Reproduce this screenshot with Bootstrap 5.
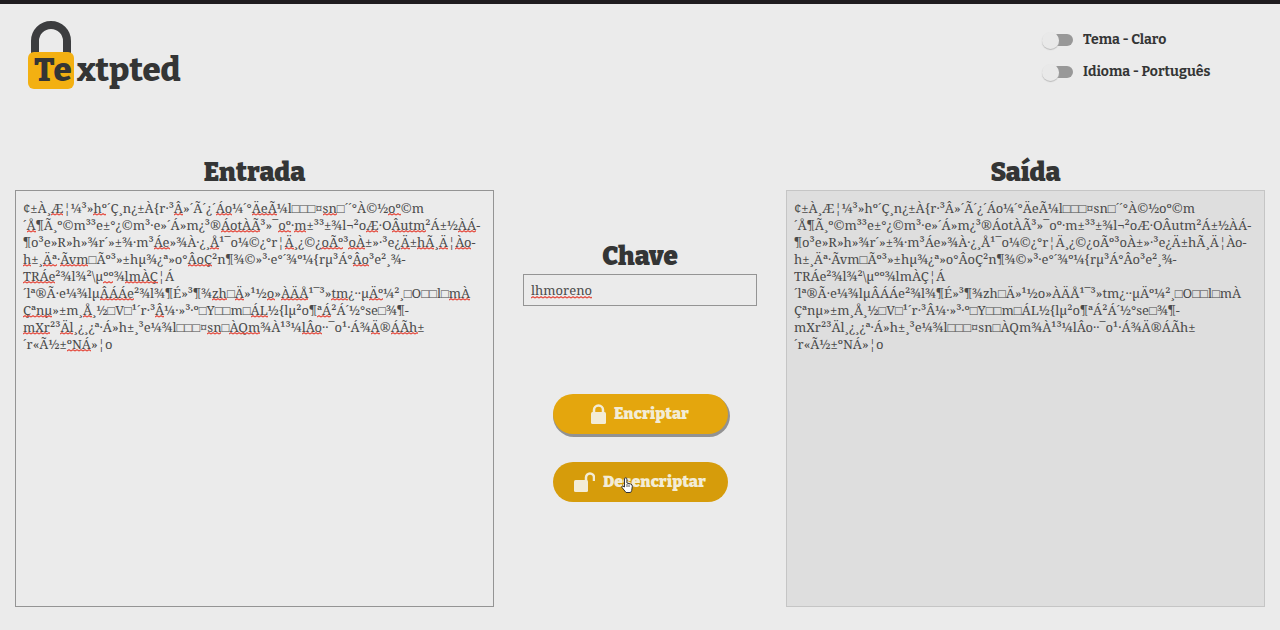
<!DOCTYPE html>
<html lang="pt-BR">
<head>
<meta charset="utf-8">
<meta name="viewport" content="width=device-width, initial-scale=1">
<title>Textpted</title>
<link href="https://cdn.jsdelivr.net/npm/bootstrap@5.3.0/dist/css/bootstrap.min.css" rel="stylesheet">
<style>
  :root { --ink: #343535; --paper: #ebebeb; --gold: #e4a60d; }
  body { background: var(--paper); color: var(--ink); border-top: 4px solid #1f1c1f; min-height: 100vh;
         font-family: "Bitter", "DejaVu Serif Condensed", "DejaVu Serif", serif; }
  .top-bar { height: 149px; padding: 16px 64px 0 28px; }
  .brand { color: var(--ink); font-size: 33px; line-height: 40px; font-weight: 800; }
  .brand-lock { width: 46px; height: 70px; }
  .brand-word { position: absolute; left: 6px; top: 30px; display: flex; gap: 5px; }
  .options { width: 173px; padding-top: 8px; gap: 8px; font-weight: 700; }
  .option { font-size: 14px; line-height: 24px; min-height: 24px; white-space: nowrap; gap: 10px; }
  .toggle { appearance: none; width: 30px; height: 12px; margin: 0; border-radius: 6px; background: #989898; position: relative; flex: none; }
  .toggle::before { content: ""; position: absolute; left: -1px; top: -2px; width: 17px; height: 17px; border-radius: 50%;
                    background: #e9e9e9; box-shadow: 0 1px 1px #bbb; }
  .toggle:checked::before { left: 14px; }
  .workspace { display: grid; grid-template-columns: 479fr 234fr 479fr; column-gap: 29px; padding: 0 15px 24px; }
  .title { font-size: 26px; line-height: 34px; padding-top: 3px; margin: 0; text-align: center; font-weight: 900; }
  .field { background: transparent; border: 1px solid #949494; border-radius: 0; color: #4a4a4a; outline: 0; display: block; width: 100%;
           font-family: "Noto Serif", serif; font-size: 13px; }
  .text-area { line-height: 17px; padding: 9px 7px; height: calc(100vh - 213px); min-height: 240px; resize: none; white-space: pre; overflow: hidden; }
  .text-area[readonly] { background: #dedede; border-color: #c5c5c5; }
  .key-field { line-height: 20px; height: 32px; padding: 0 7px; }
  .spell { position: absolute; left: 8px; top: 0; width: calc(100% - 16px); height: 100%; pointer-events: none; }
  .controls { padding-top: 84px; }
  .actions { margin-top: 88px; gap: 28px; }
  .action { color: #f3ecd5; background: var(--gold); border: 0; border-radius: 20px; width: 175px; height: 40px; font-size: 16px; line-height: 24px; font-weight: 900; }
  .action-raised { box-shadow: 1px 2px 0 1px #929292; }
  .action-hover { background: #d69c0b; }
  .pointer { position: absolute; left: 68px; top: 15px; }
</style>
</head>
<body>
<svg width="0" height="0" class="position-absolute" aria-hidden="true">
  <defs><pattern id="wave" width="4" height="3" patternUnits="userSpaceOnUse"><path d="M0 2 L2 .8 L4 2" fill="none" stroke="#e5493d" stroke-width="1.200"/></pattern></defs>
</svg>
<header class="top-bar d-flex justify-content-between align-items-start">
  <a href="#" class="brand text-decoration-none position-relative">
    <svg class="brand-lock d-block" viewBox="0 0 46 70" aria-hidden="true">
      <path d="M7 34V21a16 16 0 0 1 32 0v13" fill="none" stroke="#3c3d3f" stroke-width="8"/>
      <rect y="32" width="46" height="37" rx="6" fill="#f3b012"/>
    </svg>
    <span class="brand-word"><span>Te</span><span>xtpted</span></span>
  </a>
  <div class="options d-flex flex-column">
    <label class="option d-flex align-items-center"><input type="checkbox" role="switch" class="toggle">Tema - Claro</label>
    <label class="option d-flex align-items-center"><input type="checkbox" role="switch" class="toggle">Idioma - Português</label>
  </div>
</header>
<main class="workspace">
  <section>
    <h2 class="title"><label for="entrada">Entrada</label></h2>
    <div class="position-relative">
      <textarea id="entrada" class="field text-area" spellcheck="false">¢±À¸Æ¦¼³»hº´Ç¸n¿±À{r·³Â»´Ã´¿´Áo¼´°ÄeÃ¼l□□□¤sn□´´°À©½oº©m
´Å¶Ã¸º©m³³e±°¿©m³·e»´Á»m¿³®ÁotÀÃ³»¯oº·m±³³±¾l¬²oÆ·OÂutm²Á±½ÀÁ-
¶o³e»R»h»¾r´»±¾·m³Áe»¾À·¿¸Å¹¯o¼©¿°r¦Ä¸¿©¿oÃº³oÀ±»·³e¿Ä±hÃ¸Ä¦Ào-
h±¸Äª·Ãvm□Ãº³»±hµ¾¿ª»o°ÂoÇ²n¶¾©»³·e°´¾º¼{rµ³Á°Âo³e²¸¾-
TRÁe²¾l¾²\µºº¾lmÀÇ¦Á
´lª®Ã·e¼¾lµÂÁÁe²¾l¾¶É»³¶¾zh□Ä»¹½o»ÀÄÅ¹¯³»tm¿··µÄº¼²¸□O□□l□mÀ
Çªnµ»±m¸Å¸½□V□¹´r·³Â¼·»³·º□Y□□m□ÁL½{lµ²o¶ªÁ²Á´½°se□¾¶-
mXr²³Äl¸¿¸¿ª·Á»h±¸³e¼¾l□□□¤sn□ÀQm¾À¹³¼lÂo··¯o¹·Á¾Ä®ÁÃh±
´r«Ã½±ºNÁ»¦o</textarea>
      <svg class="spell" id="entrada-spell" aria-hidden="true"></svg>
    </div>
  </section>
  <section class="controls d-flex flex-column align-items-center">
    <h2 class="title"><label for="chave">Chave</label></h2>
    <div class="position-relative w-100">
      <input id="chave" type="text" class="field key-field" value="lhmoreno" spellcheck="false">
      <svg class="spell" id="chave-spell" aria-hidden="true"></svg>
    </div>
    <div class="actions d-flex flex-column align-items-center">
      <button type="button" class="action action-raised d-flex align-items-center justify-content-center gap-2">
        <svg width="15" height="21" viewBox="0 0 15 21" aria-hidden="true"><path d="M3 10V6a4.500 4.500 0 0 1 9 0v4" fill="none" stroke="currentColor" stroke-width="2.500"/><rect y="8" width="15" height="12" rx="1.500" fill="currentColor"/></svg>
        Encriptar
      </button>
      <button type="button" class="action action-hover position-relative d-flex align-items-center justify-content-center gap-2">
        <svg width="21" height="21" viewBox="0 0 21 21" aria-hidden="true"><path d="M12 10V5.500a4 4 0 0 1 8 0V9" fill="none" stroke="currentColor" stroke-width="2.500"/><rect y="8" width="14" height="12" rx="1.500" fill="currentColor"/></svg>
        Desencriptar
        <svg class="pointer" width="12" height="17" viewBox="0 0 12 17" aria-hidden="true"><path d="M3.500 10V2a1.200 1.200 0 0 1 2.400 0v4l3.800 1q1.800.5 1.600 2.500l-.6 4-1 2H5L1 10.500q-.6-1.500.8-1.500z" fill="#fff" stroke="#333"/><path d="M6 7v3M8 7.500V10" stroke="#333" stroke-width=".8"/></svg>
      </button>
    </div>
  </section>
  <section>
    <h2 class="title"><label for="saida">Saída</label></h2>
    <textarea id="saida" class="field text-area" readonly></textarea>
  </section>
</main>
<script src="https://cdn.jsdelivr.net/npm/bootstrap@5.3.0/dist/js/bootstrap.bundle.min.js"></script>
<script>
  const input = document.getElementById('entrada');
  document.getElementById('saida').value = input.value;

  // Draw the spelling marks under the given words, line by line.
  function underline(field, layer, words, top, step) {
    const ctx = document.createElement('canvas').getContext('2d');
    const style = getComputedStyle(field);
    ctx.font = style.fontSize + ' ' + style.fontFamily;
    field.value.split('\n').forEach((line, row) => {
      let from = 0;
      for (const word of words[row].split(' ')) {
        const at = line.indexOf(word, from);
        if (at < 0) continue;
        from = at + word.length;
        const rect = document.createElementNS('http://www.w3.org/2000/svg', 'rect');
        const group = document.createElementNS('http://www.w3.org/2000/svg', 'g');
        const x = Math.round(ctx.measureText(line.slice(0, at)).width);
        group.setAttribute('transform', `translate(${x} ${top + row * step})`);
        rect.setAttribute('width', Math.round(ctx.measureText(word).width));
        rect.setAttribute('height', 3);
        rect.setAttribute('fill', 'url(#wave)');
        group.append(rect);
        layer.append(group);
      }
    });
  }
  underline(input, document.getElementById('entrada-spell'), [
    'Æ hº Â Áo ÄeÃ sn oº', 'Å ÁotÀÃ oº m Æ Âutm ÀÁ', 'Áe Å Ä oÃº oÀ Ä hÃ Ä Ào',
    'h Äª Ãvm ÂoÇ Âo', 'TRÁe ºº lmÀÇ', 'ÂÁÁe zh Ä o ÀÄÅ tm Äº mÀ',
    'Çªnµ Å Â ÁL ªÁ', 'mXr Äl sn ÀQm lÂo Ä ÁÃh', 'ºNÁ'
  ], 23, 17);
  underline(document.getElementById('chave'), document.getElementById('chave-spell'), ['lhmoreno'], 22, 0);
</script>
</body>
</html>
